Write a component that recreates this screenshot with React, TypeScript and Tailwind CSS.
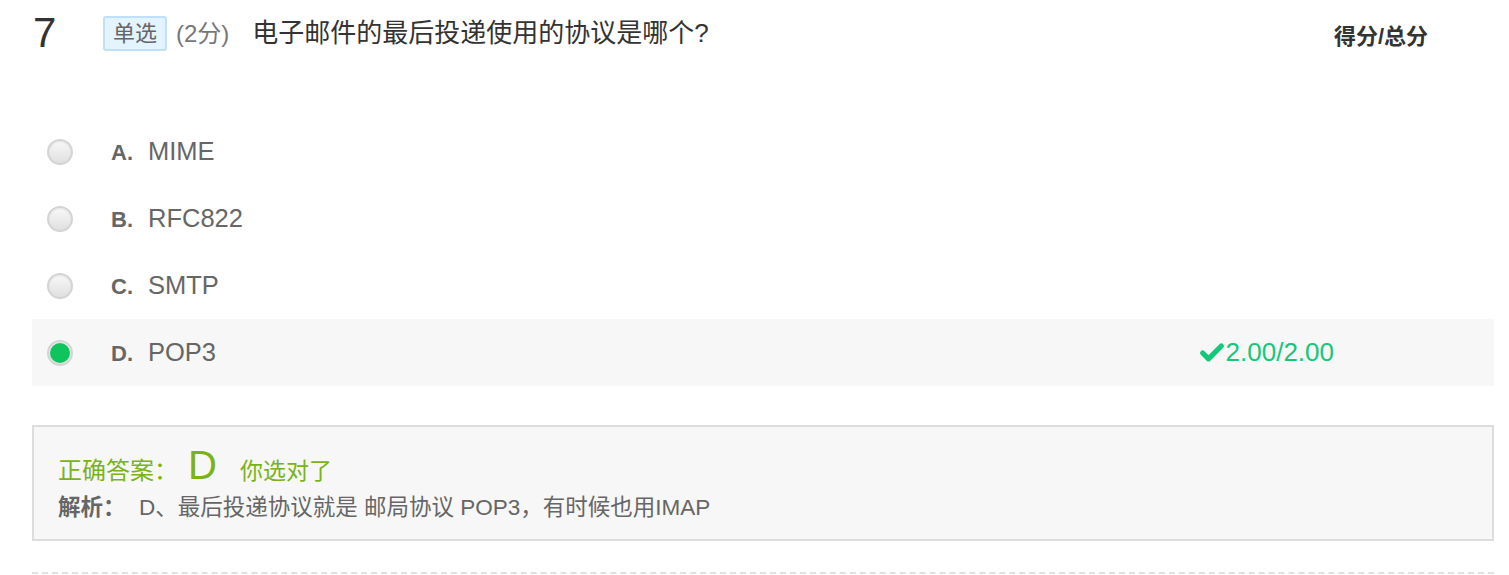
import { Check } from "lucide-react"

const font = { fontFamily: '"Liberation Sans", "Noto Sans CJK SC", sans-serif' }

const options = [
  { key: "A", text: "MIME" },
  { key: "B", text: "RFC822" },
  { key: "C", text: "SMTP" },
  { key: "D", text: "POP3", checked: true },
]

function Radio({ checked }: { checked?: boolean }) {
  return (
    <div className="w-[26px] h-[26px] rounded-full border-2 border-[#d4d4d4] bg-gradient-to-b from-[#f8f8f8] to-[#e0e0e0] flex items-center justify-center shadow-[inset_0_1px_2px_rgba(0,0,0,0.08)]">
      {checked && <div className="w-[20px] h-[20px] rounded-full bg-[#0ec55d]" />}
    </div>
  )
}

export default function App() {
  return (
    <div className="w-[1509px] h-[575px] bg-white overflow-hidden pl-8 pr-[15px]" style={font}>
      {/* header */}
      <div className="flex items-start pt-[12px] h-[118px]">
        <div className="w-[71px] text-[42px] leading-[42px] text-[#333] pl-px">7</div>
        <div className="flex items-center h-[35px] mt-[4px]">
          <span className="h-[35px] px-[8px] flex items-center border-2 border-[#bfe0f8] bg-[#e3f3ff] rounded-[3px] text-[22px] text-[#666]">单选</span>
          <span className="ml-[9px] text-[24px] text-[#777]">(2分)</span>
          <span className="ml-[23px] text-[26px] text-[#333]">电子邮件的最后投递使用的协议是哪个?</span>
        </div>
        <div className="ml-auto mr-[66px] mt-[8px] text-[22px] font-bold text-[#333]">得分/总分</div>
      </div>

      {/* options */}
      <div className="flex flex-col">
        {options.map((o) => (
          <div
            key={o.key}
            className={`h-[67px] flex items-center pl-[15px] ${o.checked ? "bg-[#f7f7f7]" : ""}`}
          >
            <Radio checked={o.checked} />
            <div className="ml-[38px] flex items-baseline">
              <span className="w-[37px] text-[22px] font-bold text-[#666]">{o.key}.</span>
              <span className="text-[25.5px] text-[#666]">{o.text}</span>
            </div>
            {o.checked && (
              <div className="ml-auto mr-[160px] flex items-center text-[#14c879]">
                <Check size={28} strokeWidth={4.5} />
                <span className="text-[26px]">2.00/2.00</span>
              </div>
            )}
          </div>
        ))}
      </div>

      {/* answer box */}
      <div className="mt-[39px] h-[116px] border-2 border-[#dddddd] bg-[#f7f7f7] pl-[24px] pt-[18px]">
        <div className="flex items-baseline text-[#7ab317]">
          <span className="text-[24px]">正确答案：</span>
          <span className="text-[40px] leading-[40px] ml-[10px]">D</span>
          <span className="text-[23px] ml-[23px]">你选对了</span>
        </div>
        <div className="flex items-center mt-[2px] text-[22.5px] text-[#666]">
          <span className="font-bold w-[81px]">解析：</span>
          <span>D、最后投递协议就是 邮局协议 POP3，有时候也用IMAP</span>
        </div>
      </div>

      <div className="mt-[31px] border-t-2 border-dashed border-[#e0e0e0]" />
    </div>
  )
}
